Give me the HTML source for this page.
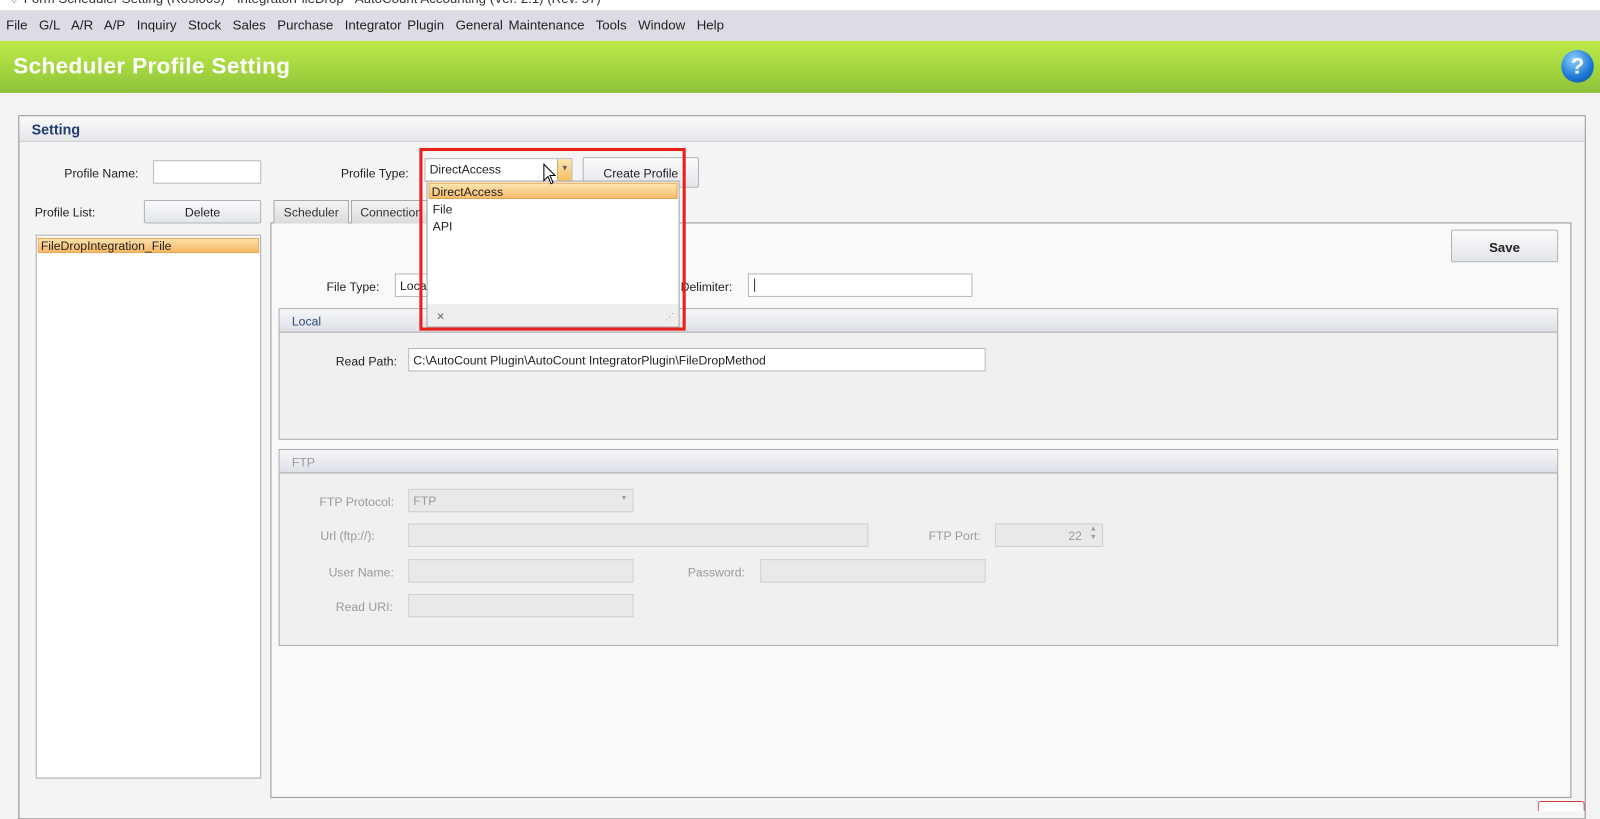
<!DOCTYPE html>
<html><head><meta charset="utf-8"><style>
*{margin:0;padding:0;box-sizing:border-box}
body{width:1600px;height:809px;overflow:hidden;background:#f3f3f3;font-family:"Liberation Sans",sans-serif;font-size:12px;color:#222}
#w{position:absolute;left:0;top:0;width:1568px;height:793px;transform:scale(1.0204);transform-origin:0 0;background:#f3f3f3}
.a{position:absolute}
.lbl{position:absolute;white-space:nowrap}
.inp{position:absolute;background:#fff;border:1px solid #b8b8b8}
.dis{background:#e9e9e9;border:1px solid #cfcfcf}
.btn{position:absolute;border:1px solid #aeb3bb;border-radius:2px;background:linear-gradient(#fbfbfc,#e3e5ea);text-align:center}
.gdis{color:#9a9a9a}
.grp{position:absolute;border:1px solid #a9a9a9;background:#f0f0f0}
.gh{height:23px;background:linear-gradient(#f6f7f9,#dde0e6);border-bottom:1px solid #a9a9a9;padding:5px 12px}
</style></head><body><div id="w">
<div class="a" style="left:0;top:0;width:1568px;height:10px;background:#fff;overflow:hidden"><div class="lbl" style="left:8px;top:-9px;font-size:13px;color:#333">&#9826; Form Scheduler Setting (R05i005) - IntegratorFileDrop - AutoCount Accounting (Ver. 2.1) (Rev. 57)</div></div>
<div class="a" style="left:0;top:10px;width:1568px;height:30px;background:#dcdce5"></div>
<div class="lbl" style="left:6px;top:17px;font-size:13px;word-spacing:2px">File&nbsp; G/L&nbsp; A/R&nbsp; A/P&nbsp; Inquiry&nbsp; Stock&nbsp; Sales&nbsp; Purchase&nbsp; Integrator Plugin&nbsp; General Maintenance&nbsp; Tools&nbsp; Window&nbsp; Help</div>
<div class="a" style="left:0;top:40px;width:1568px;height:51px;background:linear-gradient(#bdea4c,#a2d43e 60%,#8cc03a)"></div>
<div class="lbl" style="left:13px;top:52px;font-size:22px;font-weight:bold;color:#fff;letter-spacing:0.4px">Scheduler Profile Setting</div>
<div class="a" style="left:1530px;top:49px;width:32px;height:32px;border-radius:50%;background:radial-gradient(circle at 40% 30%,#8fd0ff,#1a76d2 60%,#0d4c9a);color:#fff;font-weight:bold;font-size:22px;text-align:center;line-height:32px">?</div>
<div class="a" style="left:18px;top:113px;width:1536px;height:690px;border:1px solid #8a8a8a;background:#f4f4f4"></div>
<div class="a" style="left:19px;top:114px;width:1534px;height:25px;background:linear-gradient(#fafafa,#e4e6ea);border-bottom:1px solid #c8c8c8"></div>
<div class="lbl" style="left:31px;top:119px;font-size:14px;font-weight:bold;color:#1f3c74">Setting</div>
<div class="lbl" style="left:63px;top:163px">Profile Name:</div>
<div class="inp" style="left:150px;top:157px;width:106px;height:23px"></div>
<div class="lbl" style="left:334px;top:163px">Profile Type:</div>
<div class="inp" style="left:416px;top:155px;width:145px;height:23px"></div>
<div class="lbl" style="left:421px;top:159px">DirectAccess</div>
<div class="a" style="left:546px;top:156px;width:14px;height:21px;background:linear-gradient(#fde7b0,#f5c060);border-left:1px solid #d0a050;color:#666;font-size:8px;text-align:center;line-height:18px">&#9660;</div>
<div class="btn" style="left:571px;top:154px;width:114px;height:30px;padding-top:8px">Create Profile</div>
<div class="lbl" style="left:34px;top:201px">Profile List:</div>
<div class="btn" style="left:141px;top:196px;width:115px;height:23px;padding-top:4px">Delete</div>
<div class="inp" style="left:35px;top:230px;width:221px;height:533px;border-color:#a9a9a9"></div>
<div class="a" style="left:37px;top:233px;width:217px;height:15px;background:linear-gradient(#fde0a8,#f6b868);border:1px solid #e8a650"></div>
<div class="lbl" style="left:40px;top:234px">FileDropIntegration_File</div>
<div class="a" style="left:265px;top:218px;width:1275px;height:564px;border:1px solid #999;background:#f9f9f9"></div>
<div class="a" style="left:268px;top:196px;width:74px;height:23px;border:1px solid #a9a9a9;border-bottom:none;background:linear-gradient(#f4f4f4,#dcdcdc)"></div>
<div class="lbl" style="left:278px;top:201px;color:#333">Scheduler</div>
<div class="a" style="left:344px;top:196px;width:80px;height:23px;border:1px solid #a9a9a9;border-bottom:none;background:linear-gradient(#f4f4f4,#dcdcdc)"></div>
<div class="lbl" style="left:353px;top:201px;color:#333">Connection</div>
<div class="btn" style="left:1422px;top:225px;width:105px;height:32px;padding-top:9px;font-weight:bold;font-size:13px">Save</div>
<div class="lbl" style="left:320px;top:274px">File Type:</div>
<div class="inp" style="left:387px;top:268px;width:40px;height:23px"></div>
<div class="lbl" style="left:392px;top:273px">Local</div>
<div class="lbl" style="left:667px;top:274px">Delimiter:</div>
<div class="inp" style="left:733px;top:268px;width:220px;height:23px"></div>
<div class="a" style="left:739px;top:273px;width:1px;height:13px;background:#333"></div>
<div class="grp" style="left:273px;top:302px;width:1254px;height:129px"><div class="gh" style="color:#2c4a7a">Local</div></div>
<div class="lbl" style="left:329px;top:347px">Read Path:</div>
<div class="inp" style="left:400px;top:341px;width:566px;height:23px"></div>
<div class="lbl" style="left:405px;top:346px">C:\AutoCount Plugin\AutoCount IntegratorPlugin\FileDropMethod</div>
<div class="grp" style="left:273px;top:440px;width:1254px;height:193px"><div class="gh gdis">FTP</div></div>
<div class="lbl gdis" style="left:313px;top:485px">FTP Protocol:</div>
<div class="inp dis" style="left:400px;top:479px;width:221px;height:23px"></div>
<div class="lbl gdis" style="left:405px;top:484px">FTP</div>
<div class="lbl gdis" style="left:608px;top:485px;font-size:7px">&#9660;</div>
<div class="lbl gdis" style="left:314px;top:518px">Url (ftp://):</div>
<div class="inp dis" style="left:400px;top:513px;width:451px;height:23px"></div>
<div class="lbl gdis" style="left:910px;top:518px">FTP Port:</div>
<div class="inp dis" style="left:975px;top:513px;width:106px;height:23px"></div>
<div class="lbl gdis" style="left:1047px;top:518px">22</div>
<div class="lbl gdis" style="left:1068px;top:515px;font-size:7px;line-height:8px">&#9650;<br>&#9660;</div>
<div class="lbl gdis" style="left:322px;top:554px">User Name:</div>
<div class="inp dis" style="left:400px;top:548px;width:221px;height:23px"></div>
<div class="lbl gdis" style="left:674px;top:554px">Password:</div>
<div class="inp dis" style="left:745px;top:548px;width:221px;height:23px"></div>
<div class="lbl gdis" style="left:329px;top:588px">Read URI:</div>
<div class="inp dis" style="left:400px;top:582px;width:221px;height:23px"></div>
<div class="a" style="left:418px;top:177px;width:248px;height:144px;background:#fff;border:1px solid #a0a0a0"></div>
<div class="a" style="left:420px;top:179px;width:244px;height:16px;background:linear-gradient(#fde4b0,#f5bd6c);border:1px solid #e0a04a"></div>
<div class="lbl" style="left:423px;top:181px">DirectAccess</div>
<div class="lbl" style="left:424px;top:198px">File</div>
<div class="lbl" style="left:424px;top:215px">API</div>
<div class="a" style="left:419px;top:298px;width:246px;height:22px;background:#eeeeee"></div>
<div class="lbl" style="left:428px;top:302px;color:#666;font-size:13px">&#215;</div>
<div class="lbl" style="left:652px;top:305px;color:#999;font-size:9px">&#8944;</div>
<div class="a" style="left:411px;top:145px;width:261px;height:179px;border:3px solid #e8201a"></div>
<svg class="a" style="left:532px;top:160px" width="14" height="22" viewBox="0 0 14 22"><path d="M1 1 L1 17 L5 13 L8 20 L10 19 L7 12 L12 12 Z" fill="#fff" stroke="#000" stroke-width="1"/></svg>
<div class="a" style="left:1507px;top:785px;width:46px;height:10px;border:1px solid #d04040;border-bottom:none;border-radius:3px 3px 0 0;background:#fff"></div>
</div></body></html>
